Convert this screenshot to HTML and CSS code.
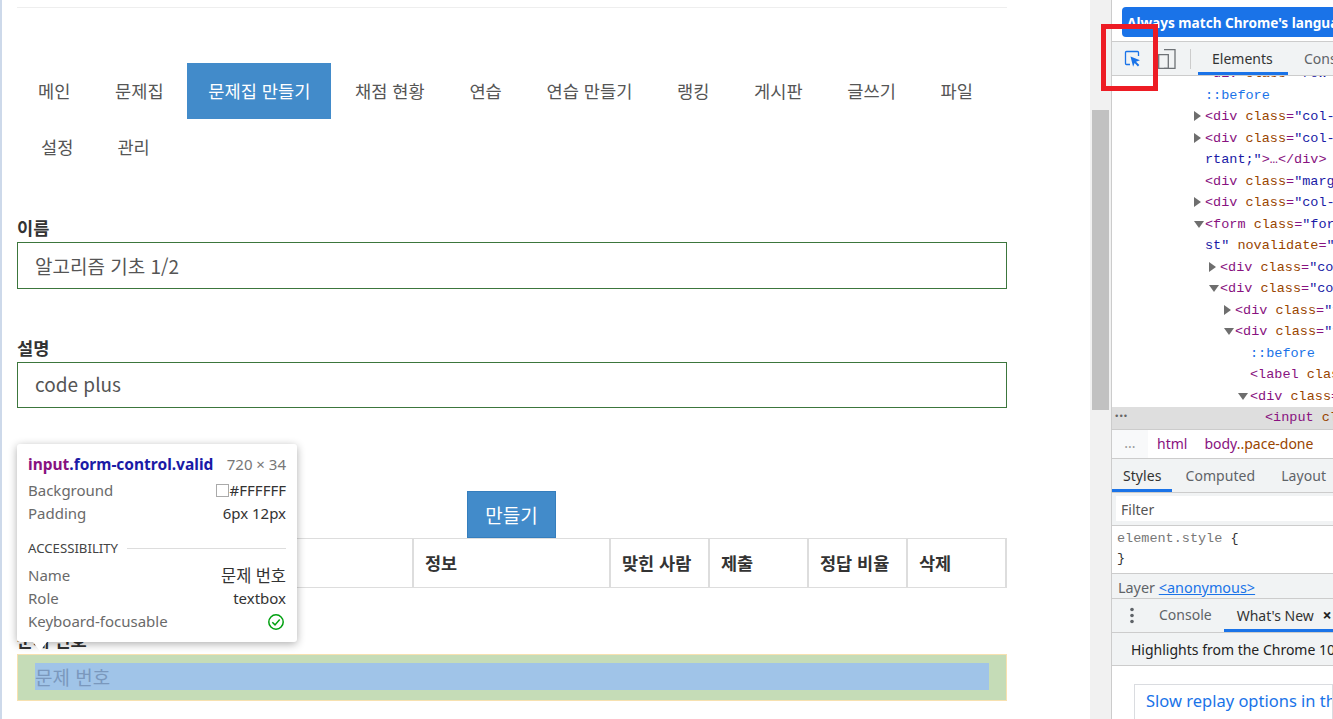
FILE: index.html
```html
<!DOCTYPE html>
<html lang="ko">
<head>
<meta charset="utf-8">
<title>문제집 만들기</title>
<link rel="stylesheet" href="styles.css">
</head>
<body>
<main class="page">
  <hr class="top-rule">
  <nav class="tabs">
    <div class="tab-row">
      <a class="tab">메인</a><a class="tab">문제집</a><a class="tab active">문제집 만들기</a><a class="tab">채점 현황</a><a class="tab">연습</a><a class="tab">연습 만들기</a><a class="tab">랭킹</a><a class="tab">게시판</a><a class="tab">글쓰기</a><a class="tab">파일</a>
    </div>
    <div class="tab-row second">
      <a class="tab">설정</a><a class="tab">관리</a>
    </div>
  </nav>
  <form class="form">
    <div class="field">
      <label class="label">이름</label>
      <div class="input">알고리즘 기초 1/2</div>
    </div>
    <div class="field second-field">
      <label class="label">설명</label>
      <div class="input">code plus</div>
    </div>
    <div class="actions"><button type="button" class="make">만들기</button></div>
    <table class="problems">
      <thead>
        <tr><th class="c-id">번호</th><th class="c-info">정보</th><th class="c-hit">맞힌 사람</th><th class="c-sub">제출</th><th class="c-rate">정답 비율</th><th class="c-del">삭제</th></tr>
      </thead>
    </table>
    <div class="field last">
      <label class="label">문제 번호</label>
      <div class="input hl"><div class="hl-content">문제 번호</div></div>
    </div>
  </form>
  <aside class="tip">
    <div class="tip-head"><span class="tip-name"><span class="tip-tag">input</span>.form-control.valid</span><span class="tip-size">720 × 34</span></div>
    <div class="tip-row"><span>Background</span><span class="tip-val"><i class="swatch"></i>#FFFFFF</span></div>
    <div class="tip-row"><span>Padding</span><span class="tip-val">6px 12px</span></div>
    <div class="tip-sec"><span>ACCESSIBILITY</span><i class="tip-line"></i></div>
    <div class="tip-row"><span>Name</span><span class="tip-val tip-ko">문제 번호</span></div>
    <div class="tip-row"><span>Role</span><span class="tip-val">textbox</span></div>
    <div class="tip-row"><span>Keyboard-focusable</span>
      <svg class="ok" width="16" height="16" viewBox="0 0 16 16"><circle cx="8" cy="8" r="7.2" fill="none" stroke="#00a010" stroke-width="1.5"/><path d="M4.300 8.200l2.700 2.700 4.700-5.400" fill="none" stroke="#00a010" stroke-width="1.5"/></svg>
    </div>
    <i class="tip-arrow"></i>
  </aside>
</main>
<div class="scrollbar"><div class="thumb"></div></div>
<section class="devtools">
  <div class="infobar"><div class="lang">Always match Chrome's language</div></div>
  <div class="toolbar">
    <svg class="ico-inspect" width="18" height="18" viewBox="0 0 18 18"><path d="M6 14.500H2.500a1 1 0 0 1-1-1V2.500a1 1 0 0 1 1-1h11a1 1 0 0 1 1 1V6" fill="none" stroke="#1a73e8" stroke-width="1.300"/><path d="M6.500 6.500l9.500 3.700-4 1.500 3.300 3.300-1.400 1.400-3.300-3.300-1.500 3.700z" fill="#1a73e8"/></svg>
    <svg class="ico-device" width="18" height="20" viewBox="0 0 18 20"><path d="M6 .7h11v18.600H6" fill="none" stroke="#6e7276" stroke-width="1.300"/><path d="M.7 5.700h9.600v13.600H.7z" fill="none" stroke="#6e7276" stroke-width="1.300"/></svg>
    <i class="tool-sep"></i>
    <div class="tool-tab on">Elements</div>
    <div class="tool-tab">Console</div>
  </div>
  <div class="tree">
    <div class="ln d0 cut"><span class="t">&lt;div</span> <span class="a">class</span>=<span class="v">"row"</span> <span class="a">id</span></div>
    <div class="ln d0"><span class="ps">::before</span></div>
    <div class="ln d0 closed"><span class="t">&lt;div</span> <span class="a">class</span>=<span class="v">"col-md-12"</span></div>
    <div class="ln d0 closed"><span class="t">&lt;div</span> <span class="a">class</span>=<span class="v">"col-md-12"</span></div>
    <div class="ln d0"><span class="v">rtant;"</span><span class="t">&gt;…&lt;/div&gt;</span></div>
    <div class="ln d0"><span class="t">&lt;div</span> <span class="a">class</span>=<span class="v">"margin-bottom"</span></div>
    <div class="ln d0 closed"><span class="t">&lt;div</span> <span class="a">class</span>=<span class="v">"col-md-12"</span></div>
    <div class="ln d0 open"><span class="t">&lt;form</span> <span class="a">class</span>=<span class="v">"form-horizontal"</span></div>
    <div class="ln d0"><span class="v">st"</span> <span class="a">novalidate</span>=<span class="v">"novalidate"</span></div>
    <div class="ln d1 closed"><span class="t">&lt;div</span> <span class="a">class</span>=<span class="v">"col-md-12"</span></div>
    <div class="ln d1 open"><span class="t">&lt;div</span> <span class="a">class</span>=<span class="v">"col-md-12"</span></div>
    <div class="ln d2 closed"><span class="t">&lt;div</span> <span class="a">class</span>=<span class="v">"form-group"</span></div>
    <div class="ln d2 open"><span class="t">&lt;div</span> <span class="a">class</span>=<span class="v">"form-group"</span></div>
    <div class="ln d3"><span class="ps">::before</span></div>
    <div class="ln d3"><span class="t">&lt;label</span> <span class="a">class</span>=<span class="v">"control-label"</span></div>
    <div class="ln d3 open"><span class="t">&lt;div</span> <span class="a">class</span>=<span class="v">"col-md-10"</span></div>
    <div class="ln d4 sel"><span class="dots">•••</span><span class="t">&lt;input</span> <span class="a">class</span>=<span class="v">"form-control"</span></div>
  </div>
  <div class="crumbs"><span class="more">...</span><span class="crumb"><span class="t">html</span></span><span class="crumb"><span class="t">body</span><span class="a">..pace-done</span></span></div>
  <div class="subtabs">
    <div class="subtab on">Styles</div><div class="subtab">Computed</div><div class="subtab">Layout</div>
  </div>
  <div class="filter"><div class="filter-box">Filter</div></div>
  <div class="rules"><div><span class="sel-name">element.style</span> <span class="br">{</span></div><div><span class="br">}</span></div></div>
  <div class="layer">Layer <a class="layer-link">&lt;anonymous&gt;</a></div>
  <div class="drawer">
    <svg class="kebab" width="4" height="17" viewBox="0 0 4 17"><circle cx="2" cy="2.500" r="1.800" fill="#5f6368"/><circle cx="2" cy="8.500" r="1.800" fill="#5f6368"/><circle cx="2" cy="14.500" r="1.800" fill="#5f6368"/></svg>
    <div class="drawer-tab">Console</div>
    <div class="drawer-tab on">What's New <b class="x">×</b></div>
  </div>
  <div class="news-head">Highlights from the Chrome 104 update</div>
  <div class="news"><div class="news-card">Slow replay options in the Recorder</div></div>
</section>
<div class="mark"></div>
</body>
</html>
```
FILE: styles.css
```css
* { box-sizing: border-box; }
html, body { margin: 0; height: 719px; overflow: hidden; }
body { display: flex; width: 1333px; background: #fff; font-family: "Noto Sans CJK KR", "Noto Sans", sans-serif; color: #333; }

/* page */
.page { position: relative; flex: 0 0 1090px; height: 719px; overflow: hidden; border-left: 2px solid #cdd9ea; padding: 7px 83px 0 15px; font-size: 17.600px; }
.top-rule { margin: 0; border: 0; border-top: 1px solid #eee; }
.tabs { margin-top: 55px; }
.tab-row { display: flex; gap: 2.700px; }
.tab-row.second { padding-left: 3px; gap: 2px; }
.tab { padding: 0 21px; height: 56px; line-height: 55px; color: #555; white-space: nowrap; }
.tab.active { background: #428bca; color: #fff; }
.form { margin-top: 40px; }
.field { margin-bottom: 45px; }
.second-field { margin-top: 46px; }
.label { display: block; font-weight: 700; line-height: 25px; color: #333; height: 27px; }
.input { height: 47px; line-height: 45px; border: 1px solid #3c763d; padding: 0 17px; color: #555; font-size: 19px; }
.second-field .input { height: 46px; line-height: 42px; }
.actions { display: flex; justify-content: center; margin-top: 83px; padding-right: 1px; }
.make { width: 89px; height: 47px; border: 1px solid #357ebd; background: #428bca; color: #fff; font: inherit; font-size: 19px; padding: 0; }
.problems { width: 990px; table-layout: fixed; border-collapse: separate; border-spacing: 0; }
.problems th { height: 50px; border: solid #ddd; border-width: 1px 2px 1px 0; padding: 0 11px 2px; text-align: left; font-weight: 700; font-size: 17.500px; color: #333; }
.c-id { width: 397px; }
.c-info { width: 197px; }
.c-hit, .c-sub, .c-rate { width: 99px; }
.field.last { margin: 39px 0 0; }
.input.hl { background: #c5dcb7; border: 1px solid #f7e1b0; padding: 8px 17px; }
.hl-content { height: 27px; line-height: 27px; background: #a0c4e8; color: #7a98bd; }

/* tooltip */
.tip { position: absolute; left: 15px; top: 444px; width: 280px; height: 198px; padding: 11px; background: #fff; border-radius: 3px; box-shadow: 0 2px 8px rgba(0,0,0,.32); font: 15px/23.300px "Noto Sans", "Noto Sans CJK KR", sans-serif; color: #6a6a6a; }
.tip-head, .tip-row, .tip-sec { display: flex; justify-content: space-between; align-items: center; }
.tip-head { height: 20px; margin-bottom: 4px; }
.tip-name { font-weight: 700; font-size: 15.500px; color: #1a1aa6; }
.tip-tag { color: #881280; }
.tip-size { color: #777; }
.tip-val { color: #333; display: flex; align-items: center; }
.tip-ko { font-size: 16.500px; }
.swatch { display: block; width: 13px; height: 13px; border: 1px solid #aaa; margin-right: 1px; }
.tip-sec { height: 22px; margin: 12px 0 4px; font-size: 13.200px; color: #444; gap: 9px; }
.tip-line { flex: 1; border-top: 1px solid #ddd; }
.ok { margin-right: 2px; }
.tip-arrow { position: absolute; left: 16px; top: 198px; border: 7px solid transparent; border-top: 9px solid #fff; border-bottom: 0; }

/* scrollbar */
.scrollbar { flex: 0 0 22px; height: 719px; background: #f1f1f1; padding-top: 110px; border-right: 1px solid #ccc; }
.thumb { width: 17px; height: 300px; margin-left: 2px; background: #c1c1c1; }

/* devtools */
.devtools { flex: 0 0 221px; height: 719px; overflow: hidden; font: 14px/20px "Noto Sans", "Open Sans", sans-serif; color: #333; display: flex; flex-direction: column; }
.infobar { height: 42px; padding: 7px 0 0 10px; border-bottom: 1px solid #ccc; flex: none; }
.lang { height: 30px; line-height: 31px; background: #1a73e8; color: #fff; font-weight: 700; font-size: 13.600px; border-radius: 4px 0 0 4px; padding-left: 5px; white-space: nowrap; overflow: hidden; }
.toolbar { height: 34px; flex: none; display: flex; align-items: center; background: #f1f3f4; border-bottom: 1px solid #ccc; overflow: hidden; }
.toolbar > * { flex: none; }
.ico-inspect { margin-left: 12px; }
.ico-device { margin-left: 16px; }
.tool-sep { width: 1px; height: 20px; background: #ccc; margin: 0 7px 0 14px; }
.tool-tab { padding: 0 14px; height: 33px; line-height: 33px; white-space: nowrap; color: #5f6368; }
.tool-tab.on { width: 90px; color: #333; border-bottom: 3px solid #1a73e8; margin-right: 2px; }
.tree { flex: none; height: 353px; overflow: hidden; font: 13.500px/21.530px "Liberation Mono", monospace; white-space: nowrap; color: #881280; }
.ln { position: relative; height: 21.530px; }
.cut { margin-top: -13px; }
.d0 { padding-left: 93px; }
.d1 { padding-left: 108px; }
.d2 { padding-left: 123px; }
.d3 { padding-left: 138px; }
.d4 { padding-left: 153px; }
.sel { background: #dedede; }
.dots { position: absolute; left: 2px; top: 0; color: #666; font-size: 9px; letter-spacing: -1px; }
.t { color: #881280; }
.a { color: #994500; }
.v { color: #1a1aa6; }
.ps { color: #1a73e8; }
.closed::before, .open::before { content: ""; position: absolute; top: 5px; }
.d0::before { left: 82px; }
.d1::before { left: 97px; }
.d2::before { left: 112px; }
.d3::before { left: 126px; }
.closed::before { border-left: 7px solid #6e6e6e; border-top: 5px solid transparent; border-bottom: 5px solid transparent; }
.open::before { top: 7px; border-top: 7px solid #6e6e6e; border-left: 5px solid transparent; border-right: 5px solid transparent; }
.crumbs { flex: none; height: 30px; display: flex; align-items: center; border-bottom: 1px solid #ccc; border-top: 1px solid #ccc; }
.more { width: 36px; text-align: center; color: #999; background: #f8f9fa; height: 28px; line-height: 26px; margin-right: 9px; }
.crumb { margin-right: 17px; white-space: nowrap; }
.subtabs { flex: none; height: 34px; display: flex; background: #f1f3f4; border-bottom: 1px solid #ccc; }
.subtab { padding: 0 13px; line-height: 33px; color: #5f6368; white-space: nowrap; letter-spacing: .06px; }
.subtab.on { padding: 0 11px; width: 62px; color: #333; border-bottom: 3px solid #1a73e8; }
.filter { flex: none; height: 33px; padding: 3px 0 5px 4px; background: #f1f3f4; border-bottom: 1px solid #ccc; }
.filter-box { background: #fff; height: 25px; line-height: 27px; padding-left: 5px; color: #555; }
.rules { flex: none; height: 48px; padding: 3px 0 0 5px; font: 13.500px/20px "Liberation Mono", monospace; border-bottom: 1px solid #ccc; }
.sel-name { color: #777; }
.br { color: #333; }
.layer { flex: none; height: 25px; line-height: 27px; font-size: 14.400px; padding-left: 6px; background: #f1f3f4; color: #5f6368; border-bottom: 1px solid #ccc; white-space: nowrap; }
.layer-link { color: #1a73e8; text-decoration: underline; }
.drawer { flex: none; height: 34px; display: flex; align-items: center; background: #f1f3f4; border-bottom: 1px solid #ccc; overflow: hidden; }
.drawer > * { flex: none; }
.kebab { margin-left: 18px; }
.drawer-tab { margin-left: 25px; white-space: nowrap; color: #5f6368; line-height: 32px; height: 33px; }
.drawer-tab.on { margin-left: 12px; padding: 0 13px; border-bottom: 3px solid #1a73e8; color: #333; width: 109px; }
.x { font-size: 16px; margin-left: 5px; color: #222; }
.news-head { flex: none; height: 33px; line-height: 33px; padding-left: 19px; background: #f1f3f4; border-bottom: 1px solid #ccc; color: #222; white-space: nowrap; }
.news { flex: 1; padding: 18px 0 0 22px; }
.news-card { border: 1px solid #dadce0; padding: 4px 0 0 11px; height: 60px; white-space: nowrap; overflow: hidden; font-size: 16.500px; line-height: 24px; color: #1a73e8; }

/* red annotation drawn over the capture */
.mark { position: absolute; left: 1101px; top: 24px; width: 57px; height: 67px; border: 5px solid #ed1c24; }
```
